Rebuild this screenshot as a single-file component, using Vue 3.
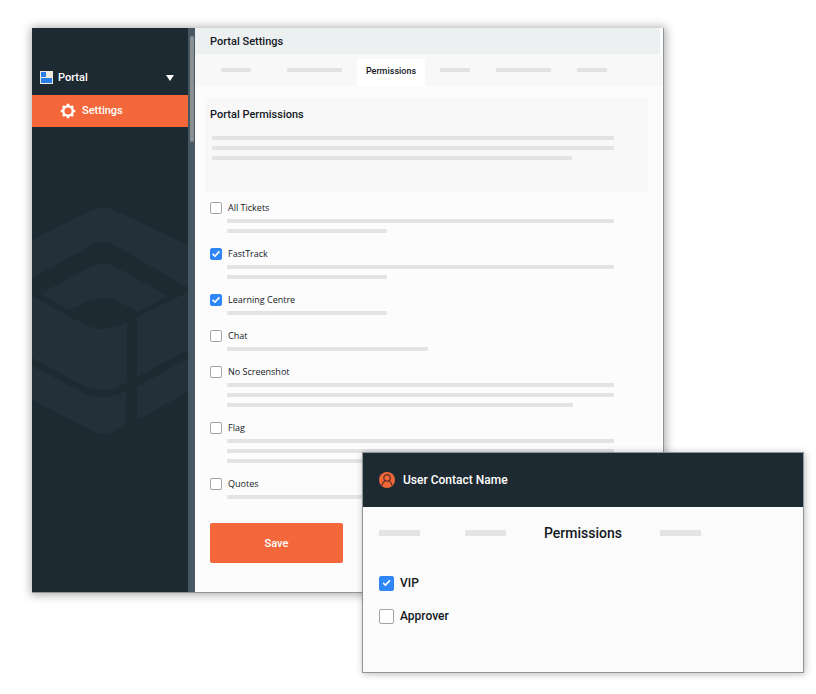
<script setup>
import { ref } from 'vue'

const portalLines = [402, 402, 360]

const gearAngles = [0, 45, 90, 135, 180, 225, 270, 315]

const permissions = ref([
  { id: 'all-tickets', label: 'All Tickets', checked: false, lines: [387, 160] },
  { id: 'fasttrack', label: 'FastTrack', checked: true, lines: [387, 160] },
  { id: 'learning-centre', label: 'Learning Centre', checked: true, lines: [160] },
  { id: 'chat', label: 'Chat', checked: false, lines: [201] },
  { id: 'no-screenshot', label: 'No Screenshot', checked: false, lines: [387, 387, 346] },
  { id: 'flag', label: 'Flag', checked: false, lines: [387, 387, 387] },
  { id: 'quotes', label: 'Quotes', checked: false, lines: [387] }
])

const contactPermissions = ref([
  { id: 'vip', label: 'VIP', checked: true },
  { id: 'approver', label: 'Approver', checked: false }
])
</script>

<template>
  <div class="desktop">
    <div class="window">
      <aside class="sidebar">
        <nav class="menu">
          <button class="menu-root" type="button">
            <svg class="portal-icon" viewBox="0 0 13 13" aria-hidden="true">
              <rect width="13" height="13" fill="#f0ebe0" />
              <rect x="1" y="1" width="5" height="5" fill="#2b7de9" />
              <rect x="1" y="7" width="11" height="5" fill="#2b7de9" />
            </svg>
            <span class="menu-label">Portal</span>
            <svg class="caret" viewBox="0 0 8 6" aria-hidden="true">
              <path d="M0 0H8L4 6Z" fill="#fff" />
            </svg>
          </button>
          <a class="menu-item" href="#settings">
            <svg class="gear" viewBox="0 0 16 16" aria-hidden="true">
              <circle cx="8" cy="8" r="4.7" fill="none" stroke="#fff" stroke-width="2.2" />
              <g fill="#fff">
                <path
                  v-for="a in gearAngles"
                  :key="a"
                  d="M6.2 3.2L6.9 0.8H9.1L9.8 3.2Z"
                  :transform="`rotate(${a} 8 8)`"
                />
              </g>
            </svg>
            <span>Settings</span>
          </a>
        </nav>
        <svg class="emblem" viewBox="0 0 156 230" aria-hidden="true">
          <g fill="#232f39">
            <path d="M0 35L60 5Q71 0 82 5L156 40V83L84 41Q71 33 58 41L0 73Z" />
            <path d="M8 89L60 61Q71 56 82 61L136 91L106 107Q96 102 88 97Q71 89 54 97Q46 102 36 105Z" />
            <path d="M0 91L50 118Q71 130 95 117V177Q71 192 50 180L0 153Z" />
            <path d="M0 161L48 186Q71 198 94 186V215Q94 219 90 221L80 227Q71 231 62 227L0 195Z" />
            <path d="M105 112L156 87V145L105 172Z" />
            <path d="M105 182L156 153V187L105 215Z" />
          </g>
        </svg>
      </aside>
      <div class="scrollbar" aria-hidden="true"><div class="thumb"></div></div>

      <main class="content">
        <header class="content-header">
          <h1>Portal Settings</h1>
        </header>
        <nav class="tabs">
          <div class="tab-group wide">
            <span class="line short"></span>
            <span class="line long"></span>
          </div>
          <a class="tab" href="#permissions" aria-current="page">Permissions</a>
          <div class="tab-group">
            <span class="line short"></span>
            <span class="line long"></span>
            <span class="line short"></span>
          </div>
        </nav>

        <section class="intro">
          <h2>Portal Permissions</h2>
          <div class="lines">
            <span v-for="(w, i) in portalLines" :key="i" class="line" :style="{ width: w + 'px' }"></span>
          </div>
        </section>

        <form class="form" @submit.prevent>
          <div v-for="p in permissions" :key="p.id" class="option">
            <div class="option-head">
              <input :id="p.id" v-model="p.checked" class="check" type="checkbox" />
              <label :for="p.id">{{ p.label }}</label>
            </div>
            <div class="lines">
              <span v-for="(w, i) in p.lines" :key="i" class="line" :style="{ width: w + 'px' }"></span>
            </div>
          </div>
          <button class="save" type="submit">Save</button>
        </form>
      </main>
    </div>

    <section class="contact" aria-labelledby="contact-name">
      <header class="contact-header">
        <svg class="avatar" viewBox="0 0 16 16" aria-hidden="true">
          <circle cx="8" cy="8" r="8" fill="#f26739" />
          <g fill="none" stroke="#5a2c23" stroke-width="1.2" stroke-linecap="round">
            <circle cx="8" cy="5.9" r="3.2" />
            <path d="M3 13.2C3.4 10.8 4.8 9.6 6 8.8M13 13.2C12.6 10.8 11.2 9.6 10 8.8" />
          </g>
        </svg>
        <h2 id="contact-name">User Contact Name</h2>
      </header>
      <nav class="contact-tabs">
        <div class="contact-group">
          <span class="block"></span>
          <span class="block"></span>
        </div>
        <a href="#contact-permissions" aria-current="page">Permissions</a>
        <span class="block"></span>
      </nav>
      <div class="contact-options">
        <div v-for="c in contactPermissions" :key="c.id" class="contact-option">
          <input :id="c.id" v-model="c.checked" class="check large" type="checkbox" />
          <label :for="c.id">{{ c.label }}</label>
        </div>
      </div>
    </section>
  </div>
</template>

<style>
body {
  background: #fff;
}
</style>

<style scoped>
* {
  box-sizing: border-box;
}

.desktop {
  position: relative;
  min-height: 100vh;
  padding: 28px 153px 28px 32px;
  font-family: Roboto, "Liberation Sans", sans-serif;
  color: #14191f;
}

h1,
h2 {
  margin: 0;
  font-weight: 500;
}

a {
  color: inherit;
  text-decoration: none;
}

.window {
  display: flex;
  background: #fcfcfc;
  box-shadow: 1px 0 0 #8f9498, 0 1px 0 #8f9498, 1px 1px 9px 2px rgba(0, 0, 0, 0.32);
}

.sidebar {
  display: flex;
  flex-direction: column;
  width: 156px;
  flex: none;
  background: #1e2a31;
  color: #fff;
}

.menu {
  padding-top: 32px;
}

.menu-root {
  display: flex;
  align-items: center;
  gap: 5px;
  width: 100%;
  height: 35px;
  padding: 0 14px 0 8px;
  border: 0;
  background: none;
  color: inherit;
  font: 500 11px/16px Roboto, "Liberation Sans", sans-serif;
}

.portal-icon {
  width: 13px;
  height: 13px;
}

.menu-label {
  flex: 1;
  text-align: left;
}

.caret {
  width: 8px;
  height: 6px;
}

.menu-item {
  display: flex;
  align-items: center;
  gap: 6px;
  height: 32px;
  padding-left: 28px;
  background: #f4673a;
  font-size: 11px;
  font-weight: 500;
  line-height: 16px;
}

.gear {
  width: 16px;
  height: 16px;
}

.emblem {
  display: block;
  width: 100%;
  margin-top: 78px;
}

.scrollbar {
  width: 7px;
  flex: none;
  padding: 8px 1px 0 2px;
  background: #475865;
}

.thumb {
  height: 106px;
  border-radius: 2px;
  background: #8b9092;
}

.content {
  flex: 1;
  min-width: 0;
}

.content-header {
  display: flex;
  align-items: center;
  height: 26px;
  margin-right: 3px;
  padding: 2px 0 0 15px;
  background: #ecf0f1;
}

.content-header h1,
.intro h2 {
  font-size: 11px;
  line-height: 16px;
}

.line {
  display: block;
  height: 4px;
  max-width: 100%;
  border-radius: 1px;
  background: #e1e3e5;
}

.tabs {
  display: flex;
  align-items: center;
  height: 32px;
  margin-right: 1px;
  padding-left: 26px;
  background: #f8f8f8;
}

.tab-group {
  display: flex;
  gap: 26px;
}

.tab-group.wide {
  gap: 36px;
}

.short {
  width: 30px;
}

.long {
  width: 55px;
}

.tab {
  align-self: flex-end;
  width: 68px;
  height: 27px;
  margin: 0 15px;
  background: #fff;
  font-size: 9px;
  font-weight: 500;
  line-height: 24px;
  text-align: center;
}

.intro {
  height: 94px;
  margin: 12px 15px 0 10px;
  padding: 9px 5px;
  background: #f8f8f8;
}

.lines {
  display: flex;
  flex-direction: column;
  gap: 6px;
}

.intro .lines {
  padding: 13px 0 0 2px;
}

.form {
  display: flex;
  flex-direction: column;
  align-items: flex-start;
  gap: 13px;
  padding: 8px 15px 29px;
}

.option {
  width: 100%;
}

.option-head {
  display: flex;
  align-items: center;
  gap: 6px;
  height: 16px;
  margin-bottom: 3px;
  font: 400 9px/16px "Open Sans", "Noto Sans", sans-serif;
}

.option .lines {
  padding-left: 17px;
}

.check {
  display: grid;
  place-items: center;
  appearance: none;
  width: 12px;
  height: 12px;
  flex: none;
  margin: 0;
  border: 1px solid #a3a6a9;
  border-radius: 2px;
  background: #fff;
}

.check.large {
  width: 15px;
  height: 15px;
}

.check:checked {
  border-color: #2f86f6;
  background: #2f86f6;
}

.check:checked::after {
  content: "";
  width: 8px;
  height: 8px;
  background: #fff;
  clip-path: polygon(0 55%, 14% 40%, 37% 62%, 85% 10%, 100% 24%, 38% 92%);
}

.save {
  width: 133px;
  height: 40px;
  margin-top: 11px;
  padding: 2px 0 0;
  border: 0;
  border-radius: 2px;
  background: #f4673a;
  color: #fff;
  font: 500 11px/16px Roboto, "Liberation Sans", sans-serif;
}

/* Floating window over the portal settings */
.contact {
  position: absolute;
  top: 453px;
  right: 13px;
  left: 363px;
  padding-bottom: 48px;
  background: #fbfbfb;
  box-shadow: 0 0 0 1px #8f9498, 1px 1px 7px 1px rgba(0, 0, 0, 0.28);
}

.contact-header {
  display: flex;
  align-items: center;
  gap: 8px;
  height: 54px;
  padding-left: 16px;
  background: #1e2a31;
  color: #fff;
}

.contact-header h2 {
  font-size: 12px;
  line-height: 16px;
}

.avatar {
  width: 16px;
  height: 16px;
}

.contact-tabs {
  display: flex;
  align-items: center;
  gap: 38px;
  padding: 16px 16px 0;
  font-size: 14px;
  font-weight: 500;
  line-height: 20px;
}

.contact-group {
  display: flex;
  gap: 45px;
}

.block {
  width: 41px;
  height: 6px;
  border-radius: 1px;
  background: #e3e4e6;
}

.contact-options {
  display: flex;
  flex-direction: column;
  gap: 17px;
  padding: 32px 16px 0;
}

.contact-option {
  display: flex;
  align-items: center;
  gap: 6px;
  font-size: 12px;
  font-weight: 500;
  line-height: 16px;
}
</style>
